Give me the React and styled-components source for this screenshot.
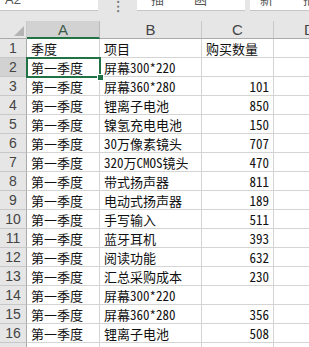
import React from 'react';
import styled, { createGlobalStyle } from 'styled-components';

const GlobalStyle = createGlobalStyle`
  html, body {
    margin: 0;
    padding: 0;
    background: #ffffff;
    overflow: hidden;
  }
`;

const Window = styled.div`
  width: 309px;
  height: 347px;
  overflow: hidden;
  background: #e6e6e6;
  font-family: "Noto Sans Mono CJK SC", "Noto Sans CJK SC", sans-serif;
`;

const FormulaBar = styled.div`
  display: flex;
  height: 12px;
  gap: 0;
`;

const Field = styled.div`
  width: ${p => p.w}px;
  flex: ${p => (p.grow ? 1 : 'none')};
  height: 11px;
  background: #ffffff;
  border-bottom: 1px solid #c6c6c6;
  overflow: hidden;
  display: flex;
  gap: 30px;
  padding-left: ${p => p.pad || 5}px;
  box-sizing: border-box;
  font-family: "Liberation Sans", "Noto Sans CJK SC", sans-serif;
  font-size: 13px;
  line-height: 13px;
  color: #555;
`;

const Clipped = styled.span`
  margin-top: -7px;
`;

const Gap = styled.div`
  width: ${p => p.w}px;
  flex: none;
  display: flex;
  justify-content: center;
`;

const Spacer = styled.div`
  height: 9px;
`;

const Sheet = styled.div`
  position: relative;
  display: grid;
  grid-template-columns: 27px 73px 102px 72px 72px;
  grid-auto-rows: 19px;
  grid-template-rows: 18px;
  background: #ffffff;
`;

const Corner = styled.div`
  position: relative;
  background: #e6e6e6;
  border-right: 1px solid #c8c8c8;
  border-bottom: 1px solid #ababab;
  &::after {
    content: '';
    position: absolute;
    right: 2px;
    bottom: 2px;
    border-style: solid;
    border-width: 0 0 10px 10px;
    border-color: transparent transparent #b4b4b4 transparent;
  }
`;

const ColHead = styled.div`
  background: ${p => (p.active ? '#d2d2d2' : '#e6e6e6')};
  border-right: 1px solid ${p => (p.active ? '#b8b8b8' : '#c8c8c8')};
  border-bottom: ${p => (p.active ? '2px solid #217346' : '1px solid #ababab')};
  color: ${p => (p.active ? '#3c5b49' : '#444444')};
  font-family: "Liberation Sans", sans-serif;
  font-size: 15px;
  line-height: 18px;
  text-align: center;
  overflow: hidden;
  white-space: nowrap;
`;

const RowHead = styled.div`
  background: ${p => (p.active ? '#d2d2d2' : '#e6e6e6')};
  border-right: 1px solid #ababab;
  border-bottom: 1px solid #c8c8c8;
  color: #444444;
  font-family: "Liberation Sans", sans-serif;
  font-size: 14px;
  line-height: 19px;
  text-align: center;
`;

const Cell = styled.div`
  border-right: 1px solid #d4d4d4;
  border-bottom: 1px solid #d4d4d4;
  padding: 0 ${p => (p.num ? 4 : 3)}px 0 4px;
  font-size: 13px;
  line-height: 19px;
  color: #111111;
  text-align: ${p => (p.num ? 'right' : 'left')};
  white-space: nowrap;
  overflow: ${p => (p.spill ? 'visible' : 'hidden')};
`;

const Selection = styled.div`
  position: absolute;
  left: 26px;
  top: 36px;
  width: 75px;
  height: 21px;
  border: 2px solid #217346;
  box-sizing: border-box;
  pointer-events: none;
  &::after {
    content: '';
    position: absolute;
    right: -5px;
    bottom: -5px;
    width: 5px;
    height: 5px;
    background: #217346;
    border: 1px solid #ffffff;
  }
`;

const rows = [
  ['季度', '项目', '购买数量'],
  ['第一季度', '屏幕300*220', ''],
  ['第一季度', '屏幕360*280', '101'],
  ['第一季度', '锂离子电池', '850'],
  ['第一季度', '镍氢充电电池', '150'],
  ['第一季度', '30万像素镜头', '707'],
  ['第一季度', '320万CMOS镜头', '470'],
  ['第一季度', '带式扬声器', '811'],
  ['第一季度', '电动式扬声器', '189'],
  ['第一季度', '手写输入', '511'],
  ['第一季度', '蓝牙耳机', '393'],
  ['第一季度', '阅读功能', '632'],
  ['第一季度', '汇总采购成本', '230'],
  ['第一季度', '屏幕300*220', ''],
  ['第一季度', '屏幕360*280', '356'],
  ['第一季度', '锂离子电池', '508'],
  ['', '', ''],
];

const isNum = v => /^\d+$/.test(v);

export default function App() {
  return (
    <Window>
      <GlobalStyle />
      <FormulaBar>
        <Field w={98}><Clipped>A2</Clipped></Field>
        <Gap w={39}><Clipped style={{ color: '#777' }}>⁝</Clipped></Gap>
        <Field w={108} pad={14}><Clipped>插</Clipped><Clipped>函</Clipped></Field>
        <Gap w={5} />
        <Field grow pad={10}><Clipped>新</Clipped><Clipped>插</Clipped></Field>
      </FormulaBar>
      <Spacer />
      <Sheet>
        <Corner />
        {['A', 'B', 'C', 'D'].map(c => (
          <ColHead key={c} active={c === 'A'}>{c}</ColHead>
        ))}
        {rows.map((r, i) => (
          <React.Fragment key={i}>
            <RowHead active={i === 1}>{i + 1}</RowHead>
            <Cell>{r[0]}</Cell>
            <Cell>{r[1]}</Cell>
            <Cell num={isNum(r[2])}>{r[2]}</Cell>
            <Cell />
          </React.Fragment>
        ))}
        <Selection />
      </Sheet>
    </Window>
  );
}
